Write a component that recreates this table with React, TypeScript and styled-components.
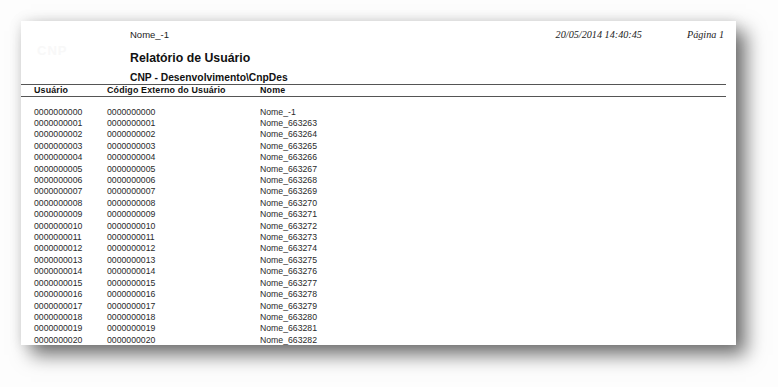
import React from "react";
import styled, { createGlobalStyle } from "styled-components";

const Global = createGlobalStyle`
  html, body { margin: 0; padding: 0; background: #ffffff; }
  body { width: 778px; height: 387px; overflow: hidden; }
`;

const Stage = styled.div`
  width: 778px;
  height: 387px;
  padding: 21px 0 0 21px;
  box-sizing: border-box;
  background: #fdfdfd;
`;

const Paper = styled.div`
  width: 715px;
  height: 324px;
  background: #ffffff;
  box-shadow: 10px 10px 18px rgba(0, 0, 0, 0.55), 0 0 12px rgba(0, 0, 0, 0.1);
  display: flex;
  flex-direction: column;
  overflow: hidden;
  font-family: "Liberation Sans", Arial, sans-serif;
  color: #1a1a1a;
`;

const HeaderBlock = styled.div`
  display: grid;
  grid-template-columns: 109px 1fr auto auto;
  align-items: center;
  padding-top: 8px;
  padding-right: 12px;
`;

const Logo = styled.div`
  grid-row: 1 / span 3;
  align-self: start;
  margin: 14px 0 0 16px;
  font-size: 13px;
  font-weight: bold;
  color: #f8f8f8;
  letter-spacing: 1px;
`;

const UserName = styled.div`
  font-size: 9.5px;
  line-height: 12px;
  color: #222;
`;

const Stamp = styled.div<{ $gap?: number }>`
  font-family: "Liberation Serif", "Times New Roman", serif;
  font-style: italic;
  font-size: 10.2px;
  line-height: 12px;
  color: #222;
  margin-left: ${(p) => p.$gap ?? 0}px;
`;

const Title = styled.div`
  grid-column: 2 / span 3;
  font-size: 12.3px;
  font-weight: bold;
  line-height: 15px;
  margin-top: 9.5px;
  color: #111;
`;

const Subtitle = styled.div`
  grid-column: 2 / span 3;
  font-size: 10.3px;
  font-weight: bold;
  line-height: 12px;
  margin-top: 6px;
  color: #111;
`;

const Rule = styled.div`
  height: 1px;
  width: 705px;
  background: #555;
  flex-shrink: 0;
`;

const Columns = styled.div<{ $head?: boolean }>`
  display: grid;
  grid-template-columns: 73px 153px 1fr;
  padding-left: 13px;
  font-size: ${(p) => (p.$head ? "8.9px" : "8.7px")};
  font-weight: ${(p) => (p.$head ? "bold" : "normal")};
  line-height: ${(p) => (p.$head ? "11.7px" : "11.4px")};
  color: ${(p) => (p.$head ? "#111" : "#2a2a2a")};
  letter-spacing: ${(p) => (p.$head ? "0.15px" : "0")};
`;

const Body = styled.div`
  display: flex;
  flex-direction: column;
  padding-top: 9.4px;
`;

const pad = (n: number) => String(n).padStart(10, "0");

const rows = Array.from({ length: 21 }, (_, i) => ({
  user: pad(i),
  ext: pad(i),
  name: i === 0 ? "Nome_-1" : `Nome_${663262 + i}`,
}));

export default function App() {
  return (
    <>
      <Global />
      <Stage>
        <Paper>
          <HeaderBlock>
            <Logo>CNP</Logo>
            <UserName>Nome_-1</UserName>
            <Stamp>20/05/2014 14:40:45</Stamp>
            <Stamp $gap={45}>Página 1</Stamp>
            <Title>Relatório de Usuário</Title>
            <Subtitle>CNP - Desenvolvimento\CnpDes</Subtitle>
          </HeaderBlock>
          <Rule />
          <Columns $head>
            <span>Usuário</span>
            <span>Código Externo do Usuário</span>
            <span>Nome</span>
          </Columns>
          <Rule />
          <Body>
            {rows.map((r) => (
              <Columns key={r.user}>
                <span>{r.user}</span>
                <span>{r.ext}</span>
                <span>{r.name}</span>
              </Columns>
            ))}
          </Body>
        </Paper>
      </Stage>
    </>
  );
}
